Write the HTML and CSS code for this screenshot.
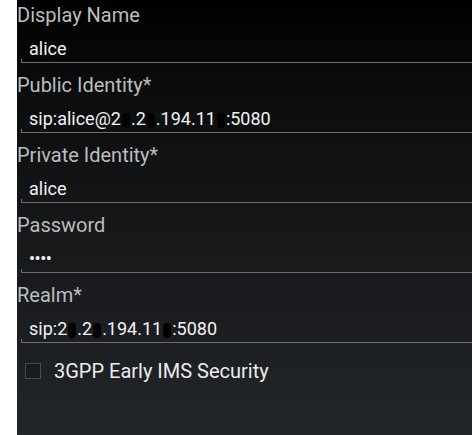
FILE: index.html
```html
<!DOCTYPE html>
<html>
<head>
<meta charset="utf-8">
<link rel="stylesheet" href="styles.css">
</head>
<body>
<div class="screen">
  <div class="field">
    <div class="label">Display Name</div>
    <div class="input">alice</div>
  </div>
  <div class="field">
    <div class="label">Public Identity*</div>
    <div class="input">sip:alice@2<span class="redact"></span>.2<span class="redact"></span>.194.11<span class="redact"></span>:5080</div>
  </div>
  <div class="field">
    <div class="label">Private Identity*</div>
    <div class="input">alice</div>
  </div>
  <div class="field">
    <div class="label">Password</div>
    <div class="input dots">••••</div>
  </div>
  <div class="field">
    <div class="label">Realm*</div>
    <div class="input">sip:2<span class="redact"></span>.2<span class="redact"></span>.194.11<span class="redact"></span>:5080</div>
  </div>
  <div class="check-row">
    <span class="checkbox"></span>
    <span class="check-label">3GPP Early IMS Security</span>
  </div>
</div>
</body>
</html>
```
FILE: styles.css
```css
html, body {
  margin: 0;
  padding: 0;
  background: #ffffff;
}
body {
  font-family: Roboto, "Liberation Sans", sans-serif;
}
.screen {
  margin-left: 17px;
  height: 435px;
  overflow: hidden;
  background: linear-gradient(to bottom, #000000 0%, #0b0c0d 20%, #16181a 55%, #22252a 100%);
  display: flex;
  flex-direction: column;
}
.field {
  padding-top: 2px;
  height: 70px;
  box-sizing: border-box;
  flex: none;
}
.label {
  font-size: 20px;
  line-height: 26px;
  color: #bdbdbd;
  white-space: nowrap;
}
.input {
  position: relative;
  margin-top: 9px;
  margin-left: 4px;
  padding-left: 8px;
  padding-bottom: 1px;
  font-size: 18px;
  line-height: 24px;
  color: #f2f2f2;
  border-bottom: 1px solid #6e6e6e;
  white-space: nowrap;
}
.input::before {
  content: "";
  position: absolute;
  left: 0;
  bottom: -1px;
  width: 1px;
  height: 4px;
  background: #6e6e6e;
}
.dots {
  letter-spacing: -0.5px;
}
.redact {
  display: inline-block;
  width: 8px;
  height: 15px;
  margin: 0 1px;
  background: #000;
  border-radius: 4px;
  vertical-align: -3px;
}
.check-row {
  display: flex;
  align-items: center;
  height: 26px;
  margin-top: 8px;
  padding-left: 8px;
  flex: none;
}
.checkbox {
  width: 14px;
  height: 14px;
  border: 1px solid #45484c;
  background: rgba(0,0,0,0.15);
  margin-right: 13px;
  flex: none;
}
.check-label {
  font-size: 20px;
  line-height: 26px;
  color: #ececec;
  white-space: nowrap;
}
```
